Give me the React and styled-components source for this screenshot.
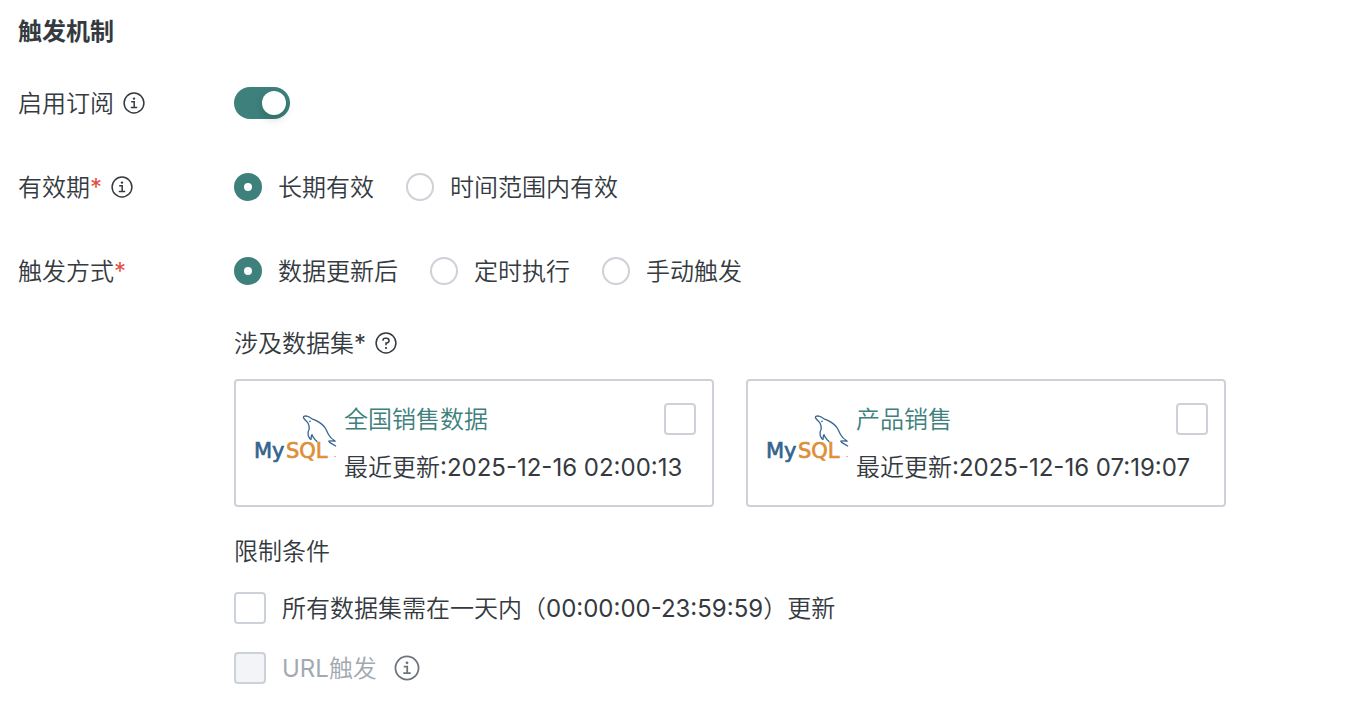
import React from 'react';
import styled, { createGlobalStyle } from 'styled-components';

const GlobalStyle = createGlobalStyle`
  *, *::before, *::after {
    box-sizing: border-box;
  }

  body {
    margin: 0;
    background-color: #fff;
    color: #343a40;
    font-family: Inter, "Noto Sans CJK SC", sans-serif;
    font-size: 24px;
    font-weight: 350;
    line-height: 32px;
  }
`;

const Page = styled.form`
  padding: 15px 18px;
`;

const Heading = styled.h2`
  margin: 0 0 40px;
  padding-top: 2px;
  font-size: 24px;
  font-weight: 700;
  line-height: 30px;
`;

const Row = styled.div`
  display: flex;
  align-items: flex-start;

  & + & {
    margin-top: 52px;
  }
`;

const RowLabel = styled.div`
  display: flex;
  align-items: center;
  flex: 0 0 216px;
  height: 32px;
`;

const RowContent = styled.div`
  flex: 1;
  min-width: 0;
`;

const Options = styled.div`
  display: flex;
  flex-wrap: wrap;
  gap: 32px;
`;

/* the top padding optically centres the glyphs next to the controls */
const Text = styled.span`
  display: block;
  padding-top: 2px;
  line-height: 30px;
`;

const Latin = styled.span`
  font-variation-settings: "opsz" 14;
  font-weight: 400;
`;

const Required = styled(Latin)`
  color: ${(props) => (props.$plain ? 'inherit' : '#e0523f')};
`;

const Icon = styled.svg`
  flex: none;
  width: ${(props) => props.$size || 24}px;
  height: ${(props) => props.$size || 24}px;
  margin-left: ${(props) => props.$gap || 8}px;
  color: ${(props) => props.$color || '#343a40'};
`;

const Switch = styled.input`
  appearance: none;
  display: flex;
  align-items: center;
  width: 56px;
  height: 32px;
  margin: 0;
  padding: 4px;
  border-radius: 16px;
  background-color: #c9ced6;
  cursor: pointer;

  &::before {
    content: '';
    width: 24px;
    height: 24px;
    border-radius: 50%;
    background-color: #fff;
    box-shadow: 0 4px 8px rgba(0, 35, 11, 0.2);
  }

  &:checked {
    justify-content: flex-end;
    background-color: #3d807c;
  }
`;

const OptionLabel = styled.label`
  display: flex;
  align-items: center;
  gap: 16px;
  color: ${(props) => (props.$disabled ? '#a3a9b1' : 'inherit')};
  cursor: pointer;
`;

const RadioInput = styled.input`
  appearance: none;
  flex: none;
  width: 28px;
  height: 28px;
  margin: 0;
  border: 2px solid #cdd1d8;
  border-radius: 50%;
  background-color: #fff;

  &:checked {
    border: 10px solid #3d807c;
  }
`;

const CheckInput = styled.input`
  appearance: none;
  flex: none;
  width: 32px;
  height: 32px;
  margin: 0;
  border: 2px solid #cdd1d8;
  border-radius: 4px;
  background-color: #fff;

  &:checked {
    border: 8px solid #3d807c;
  }

  &:disabled {
    background-color: #f2f4f8;
  }
`;

const SubTitle = styled.div`
  display: flex;
  align-items: center;
  margin-top: ${(props) => props.$top}px;
`;

const Cards = styled.div`
  display: flex;
  gap: 32px;
  margin-top: 20px;
`;

const Card = styled.div`
  display: flex;
  flex: 0 1 480px;
  gap: 4px;
  padding: 14px 16px 14px 8px;
  border: 2px solid #cdd1d8;
  border-radius: 4px;
`;

const CardBody = styled.div`
  display: flex;
  flex: 1;
  flex-direction: column;
  gap: 16px;
  min-width: 0;
  padding-top: 8px;
  white-space: nowrap;
`;

const CardTop = styled.div`
  display: flex;
  align-items: center;
  justify-content: space-between;
`;

const DatasetLink = styled.a`
  color: #3d807c;
  text-decoration: none;
`;

const Logo = styled.svg`
  flex: none;
  width: 96px;
  height: 96px;
`;

const LogoText = styled.text`
  font-family: "DejaVu Sans", sans-serif;
  font-size: 21px;
  font-weight: 400;
  fill: ${(props) => props.$color};
  stroke: ${(props) => props.$color};
  stroke-width: 0.7px;
`;

const Limits = styled.div`
  display: flex;
  flex-direction: column;
  gap: 28px;
  margin-top: 25px;
`;

const LimitRow = styled.div`
  display: flex;
  align-items: center;
`;

const InfoIcon = (props) => (
  <Icon viewBox="0 0 24 24" fill="none" stroke="currentColor" strokeWidth="1.5" {...props}>
    <circle cx="12" cy="12" r="9.9" />
    <path d="M9.2 10.8h3v5.6M8.8 16.4h6.4" />
    <circle cx="12" cy="7.6" r="1.2" fill="currentColor" stroke="none" />
  </Icon>
);

const HelpIcon = () => (
  <Icon viewBox="0 0 24 24" fill="none" stroke="currentColor" strokeWidth="1.5">
    <circle cx="12" cy="12" r="9.9" />
    <path d="M9 9.8V9.4a2.2 2.2 0 0 1 2.2-2.2h1.4a2.4 2.4 0 0 1 0 4.8H12v2.2" />
    <circle cx="12" cy="17" r="1.1" fill="currentColor" stroke="none" />
  </Icon>
);

const MysqlLogo = () => (
  <Logo viewBox="0 0 96 96" role="img" aria-label="MySQL">
    <path
      d="M59.5 22.8C59 20.8 61.5 20.6 64.3 21.5L68.7 24.2C73 25.8 77.5 28.5 80.3 31.7C82.5 34.5 83 37 84.5 39.5C86 42.5 88.5 44.5 91.3 46.2C89 46 87 45.6 84.8 46.2C85.6 48.4 89.5 48.8 92 51.4M59.5 22.8C60.8 25 63 26.2 64.2 28.5C65.2 30.5 65.5 32 65.2 34C64 36 63.8 38 64.2 40.2C64.8 42.2 65.6 43.8 67 44.4C67.2 42.6 67 41.2 68 39.6C68.8 42.6 71 44.6 73.4 46.8"
      fill="none"
      stroke="#35648f"
      strokeWidth="1.3"
      strokeLinejoin="round"
    />
    <circle cx="66" cy="26.4" r="0.8" fill="#35648f" />
    <LogoText x="10" y="63" $color="#35648f">My</LogoText>
    <LogoText x="42" y="63" $color="#e08e35">SQL</LogoText>
    <circle cx="91" cy="61.5" r="0.7" fill="#e08e35" />
  </Logo>
);

const Radio = ({ name, label, checked }) => (
  <OptionLabel>
    <RadioInput type="radio" name={name} defaultChecked={checked} />
    <Text>{label}</Text>
  </OptionLabel>
);

const DatasetCard = ({ name, time }) => (
  <Card>
    <MysqlLogo />
    <CardBody>
      <CardTop>
        <DatasetLink href="#">
          <Text>{name}</Text>
        </DatasetLink>
        <CheckInput type="checkbox" aria-label={name} />
      </CardTop>
      <Text>最近更新<Latin>:{time}</Latin></Text>
    </CardBody>
  </Card>
);

const App = () => {
  return (
    <>
      <GlobalStyle />
      <Page>
        <Heading>触发机制</Heading>
        <Row>
          <RowLabel>
            <Text as="label" htmlFor="enabled">启用订阅</Text>
            <InfoIcon />
          </RowLabel>
          <RowContent>
            <Switch type="checkbox" role="switch" id="enabled" defaultChecked />
          </RowContent>
        </Row>
        <Row>
          <RowLabel>
            <Text>有效期<Required>*</Required></Text>
            <InfoIcon />
          </RowLabel>
          <RowContent>
            <Options>
              <Radio name="validity" label="长期有效" checked />
              <Radio name="validity" label="时间范围内有效" />
            </Options>
          </RowContent>
        </Row>
        <Row>
          <RowLabel>
            <Text>触发方式<Required>*</Required></Text>
          </RowLabel>
          <RowContent>
            <Options>
              <Radio name="trigger" label="数据更新后" checked />
              <Radio name="trigger" label="定时执行" />
              <Radio name="trigger" label="手动触发" />
            </Options>
            <SubTitle $top={40}>
              <Text>涉及数据集<Required $plain>*</Required></Text>
              <HelpIcon />
            </SubTitle>
            <Cards>
              <DatasetCard name="全国销售数据" time="2025-12-16 02:00:13" />
              <DatasetCard name="产品销售" time="2025-12-16 07:19:07" />
            </Cards>
            <SubTitle $top={28}>
              <Text>限制条件</Text>
            </SubTitle>
            <Limits>
              <OptionLabel>
                <CheckInput type="checkbox" />
                <Text>所有数据集需在一天内（<Latin>00:00:00-23:59:59</Latin>）更新</Text>
              </OptionLabel>
              <LimitRow>
                <OptionLabel $disabled>
                  <CheckInput type="checkbox" disabled />
                  <Text><Latin>URL</Latin>触发</Text>
                </OptionLabel>
                <InfoIcon $size={28} $gap={16} $color="#6c737b" />
              </LimitRow>
            </Limits>
          </RowContent>
        </Row>
      </Page>
    </>
  );
};

export default App;
